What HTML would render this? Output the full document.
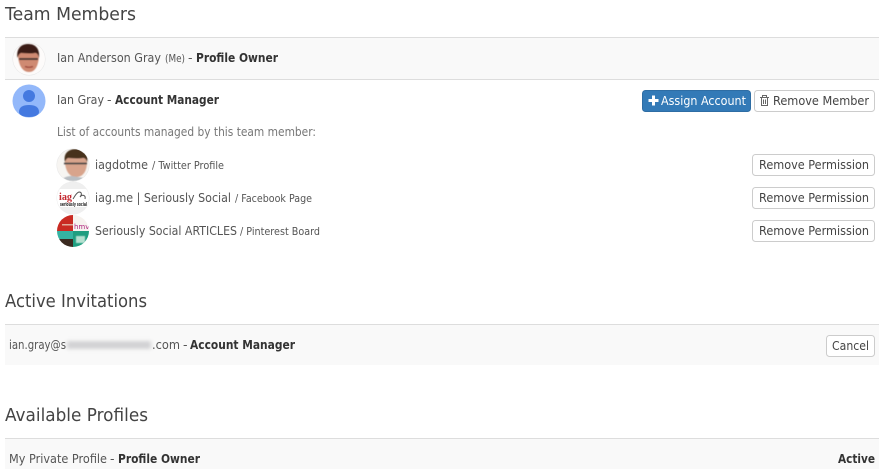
<!DOCTYPE html>
<html><head><meta charset="utf-8"><style>
html,body{margin:0;padding:0;background:#fff;width:883px;height:469px;overflow:hidden}
svg{display:block}
text{font-family:"DejaVu Sans",sans-serif;font-size:12.5px;fill:#555}
.h{font-size:18px;fill:#444}
.b{font-weight:bold;fill:#333}
.s{font-size:10.5px;fill:#555}
.bt{fill:#444}
</style></head><body>
<svg width="883" height="469" viewBox="0 0 883 469" xmlns="http://www.w3.org/2000/svg">
<defs>
<clipPath id="c1"><circle cx="29" cy="59" r="16"/></clipPath>
<clipPath id="c2"><circle cx="73" cy="165" r="16"/></clipPath>
<clipPath id="c3"><circle cx="73" cy="198" r="16"/></clipPath>
<clipPath id="c4"><circle cx="73" cy="231" r="16"/></clipPath>
<filter id="bl" x="-10%" y="-80%" width="120%" height="260%"><feGaussianBlur stdDeviation="2 1.8"/></filter>
<filter id="sf" x="-20%" y="-20%" width="140%" height="140%"><feGaussianBlur stdDeviation="0.6"/></filter>
</defs>
<text class="h" x="5" y="20" textLength="131" lengthAdjust="spacingAndGlyphs">Team Members</text>
<rect x="5" y="37" width="874" height="43" fill="#f9f9f9"/>
<rect x="5" y="37" width="874" height="1" fill="#ddd"/>
<rect x="5" y="79" width="874" height="1" fill="#ddd"/>

<circle cx="29" cy="59" r="16.5" fill="#e6e6e6"/>
<g clip-path="url(#c1)"><rect x="13" y="43" width="32" height="32" fill="#fdfbfa"/>
<g filter="url(#sf)">
<path d="M18 53C18 66 23 72 29 72C35 72 39 66 39 53Z" fill="#cf8a72"/>
<path d="M17.500 58C16 49 21 44 28 44C35 44 40 48 39 58C38 54 37 53 35 53C30 54 25 53 21 53C19 54 18.500 55 17.500 58Z" fill="#3a1f16"/>
<path d="M19 59H38" stroke="#332b2a" stroke-width="1.8"/>
<path d="M25 66.500Q29 68 33 66.500" stroke="#9c4238" stroke-width="1.3" fill="none"/>
</g></g>
<text x="57" y="62" textLength="104" lengthAdjust="spacingAndGlyphs">Ian Anderson Gray</text>
<text class="s" x="165" y="62" textLength="20" lengthAdjust="spacingAndGlyphs">(Me)</text>
<text x="188" y="62">-</text>
<text class="b" x="196" y="62" textLength="82" lengthAdjust="spacingAndGlyphs">Profile Owner</text>

<circle cx="29" cy="101" r="16.5" fill="#93b8fa"/>
<circle cx="29" cy="96" r="6" fill="#4479e0"/>
<path d="M19 112C19 107 23 105 29 105C35 105 39 107 39 112C39 115 35 117 29 117C23 117 19 115 19 112Z" fill="#4479e0"/>
<text x="57" y="104" textLength="47" lengthAdjust="spacingAndGlyphs">Ian Gray</text>
<text x="107" y="104">-</text>
<text class="b" x="115" y="104" textLength="104" lengthAdjust="spacingAndGlyphs">Account Manager</text>

<rect x="642.500" y="90.500" width="108" height="21" rx="3" fill="#337ab7" stroke="#2e6da4"/>
<path d="M653.500 95.500V105.500M648.500 100.500H658.500" stroke="#fff" stroke-width="3"/>
<text x="661" y="105" textLength="85" lengthAdjust="spacingAndGlyphs" style="fill:#fff">Assign Account</text>
<rect x="754.500" y="90.500" width="120" height="21" rx="3" fill="#fff" stroke="#ccc"/>
<path d="M760 97.500H769M762.500 97V95.500H766.500V97M761.500 98V105.500H767.500V98M763.500 99.500V104M765.500 99.500V104" stroke="#666" stroke-width="1" fill="none"/>
<text class="bt" x="773" y="105" textLength="96" lengthAdjust="spacingAndGlyphs">Remove Member</text>

<text x="57" y="136" textLength="259" lengthAdjust="spacingAndGlyphs" style="fill:#777">List of accounts managed by this team member:</text>

<circle cx="73" cy="165" r="16.500" fill="#e6e6e6"/>
<g clip-path="url(#c2)"><rect x="57" y="149" width="32" height="32" fill="#f7f5f2"/>
<g filter="url(#sf)">
<path d="M65 156C64 170 69 177 76 177C84 177 88 170 87 156Z" fill="#d8a48c"/>
<path d="M65 162C63 153 69 149 76 149C84 149 89 153 87 162C86 159 85 158 83 158C77 159 72 158 68 158C66 159 66 160 65 162Z" fill="#46301f"/>
<path d="M64 163.500H87" stroke="#444" stroke-width="1.8"/>
<path d="M60 181C64 177 68 176 72 176L84 178C86 179 88 180 89 181Z" fill="#b9bec3"/>
</g></g>
<text x="95" y="169" textLength="53" lengthAdjust="spacingAndGlyphs">iagdotme</text>
<text class="s" x="152" y="169" textLength="72" lengthAdjust="spacingAndGlyphs">/ Twitter Profile</text>
<rect x="752.500" y="154.500" width="122" height="21" rx="3" fill="#fff" stroke="#ccc"/>
<text class="bt" x="759" y="169" textLength="110" lengthAdjust="spacingAndGlyphs">Remove Permission</text>

<circle cx="73" cy="198" r="16.500" fill="#ececec"/>
<g clip-path="url(#c3)"><rect x="57" y="182" width="32" height="32" fill="#efefef"/>
<rect x="57" y="189" width="32" height="18" fill="#fff"/>
<text x="59" y="200" style="font-size:10px;font-weight:bold;fill:#c4262e;font-family:'Liberation Serif',serif" textLength="13" lengthAdjust="spacingAndGlyphs">iag</text>
<path d="M73 199C75 196 76 193 79 192C82 192 82 195 80 197C82 194 86 195 85 199" stroke="#555" fill="none"/>
<text x="60" y="206" style="font-size:5px;font-weight:bold;fill:#222" textLength="27" lengthAdjust="spacingAndGlyphs">seriously social</text></g>
<text x="95" y="202" textLength="136" lengthAdjust="spacingAndGlyphs">iag.me | Seriously Social</text>
<text class="s" x="235" y="202" textLength="77" lengthAdjust="spacingAndGlyphs">/ Facebook Page</text>
<rect x="752.500" y="187.500" width="122" height="21" rx="3" fill="#fff" stroke="#ccc"/>
<text class="bt" x="759" y="202" textLength="110" lengthAdjust="spacingAndGlyphs">Remove Permission</text>

<g clip-path="url(#c4)"><rect x="57" y="215" width="16" height="16" fill="#c92a22"/>
<rect x="62" y="224" width="11" height="1.500" fill="#e0a898"/>
<rect x="73" y="215" width="16" height="16" fill="#f6f2ee"/>
<rect x="57" y="231" width="16" height="8" fill="#35b3a2"/>
<rect x="57" y="239" width="16" height="8" fill="#3b2a20"/>
<rect x="73" y="231" width="16" height="16" fill="#1f9e80"/>
<rect x="76" y="236" width="9" height="7" fill="#b5e0d0" filter="url(#sf)"/>
<text x="74" y="229" style="font-size:7px;fill:#b0267f">hmv</text></g>
<text x="95" y="235" textLength="142" lengthAdjust="spacingAndGlyphs">Seriously Social ARTICLES</text>
<text class="s" x="240" y="235" textLength="80" lengthAdjust="spacingAndGlyphs">/ Pinterest Board</text>
<rect x="752.500" y="220.500" width="122" height="21" rx="3" fill="#fff" stroke="#ccc"/>
<text class="bt" x="759" y="235" textLength="110" lengthAdjust="spacingAndGlyphs">Remove Permission</text>

<text class="h" x="5" y="307" textLength="142" lengthAdjust="spacingAndGlyphs">Active Invitations</text>
<rect x="5" y="324" width="874" height="41" fill="#f9f9f9"/>
<rect x="5" y="324" width="874" height="1" fill="#ddd"/>
<rect x="67" y="341" width="84" height="8" fill="#d2d2d4" filter="url(#bl)"/>
<text x="9" y="349" textLength="57" lengthAdjust="spacingAndGlyphs">ian.gray@s</text>
<text x="152" y="349" textLength="28" lengthAdjust="spacingAndGlyphs">.com</text>
<text x="183" y="349">-</text>
<text class="b" x="190" y="349" textLength="105" lengthAdjust="spacingAndGlyphs">Account Manager</text>
<rect x="826.500" y="335.500" width="48" height="21" rx="3" fill="#fff" stroke="#ccc"/>
<text class="bt" x="832" y="350" textLength="37" lengthAdjust="spacingAndGlyphs">Cancel</text>

<text class="h" x="5" y="421" textLength="143" lengthAdjust="spacingAndGlyphs">Available Profiles</text>
<rect x="5" y="438" width="874" height="31" fill="#f9f9f9"/>
<rect x="5" y="438" width="874" height="1" fill="#ddd"/>
<text x="9" y="463" textLength="98" lengthAdjust="spacingAndGlyphs">My Private Profile</text>
<text x="110" y="463">-</text>
<text class="b" x="118" y="463" textLength="82" lengthAdjust="spacingAndGlyphs">Profile Owner</text>
<text class="b" x="838" y="463" textLength="37" lengthAdjust="spacingAndGlyphs">Active</text>
</svg>
</body></html>
